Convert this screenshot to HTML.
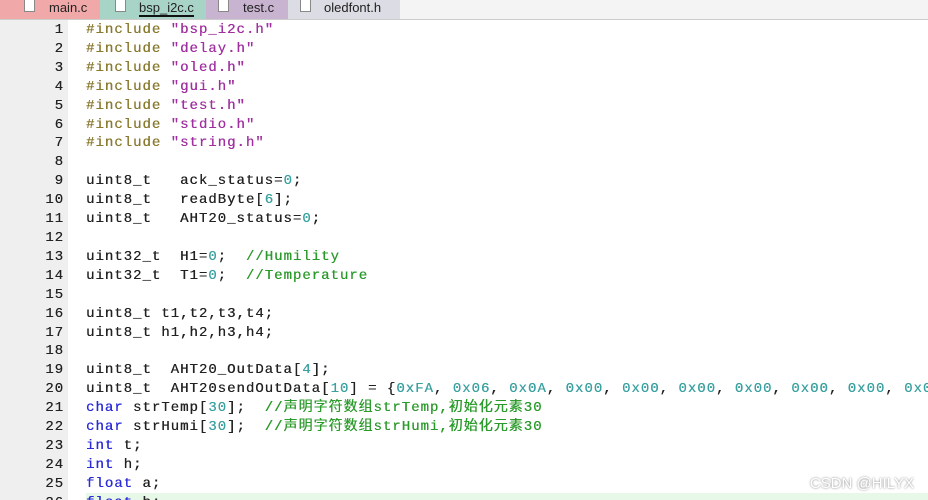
<!DOCTYPE html><html><head><style>
html,body{margin:0;width:928px;height:500px;overflow:hidden;background:#fff;font-family:"Liberation Sans",sans-serif;position:relative}
.tabs{position:absolute;top:0;left:0;width:928px;height:19px;background:#f4f4f4;border-bottom:1px solid #ccc}
.tab{position:absolute;top:0;height:19px;font-size:13px;line-height:15px;color:#222}
.tab i{position:absolute;top:0;width:9px;height:11px;background:#fff;border:1px solid #888;border-top:none}
.gut{position:absolute;top:20px;left:0;width:68px;height:480px;background:#efefef}
.code{position:absolute;top:21px;left:0;font-family:"Liberation Mono","Noto Sans CJK SC",monospace;font-size:14px;letter-spacing:1px;line-height:18.92px;text-shadow:0.3px 0 0 currentColor}
.l{height:18.92px;position:relative;white-space:pre;overflow:hidden;width:928px}
.n{display:inline-block;width:64px;text-align:right;color:#222;margin-right:22px}
.p{color:#8a7a30}.s{color:#a030a0}.k{color:#2a2ad8}.d{color:#3aa0a0}.c{color:#2a9a2a}.t{color:#222}
.hl{position:absolute;left:86px;top:493px;width:842px;height:19px;background:#e8f8e8}
.wm{position:absolute;right:14px;bottom:8px;font-size:15px;color:#fff;text-shadow:0 0 2px #777}
</style></head><body>
<div class="tabs">
<div class="tab" style="left:0;width:100px;background:#f0a8a8"><i style="left:24px"></i><span style="position:absolute;left:49px">main.c</span></div>
<div class="tab" style="left:100px;width:106px;background:#a8d4c8"><i style="left:15px"></i><span style="position:absolute;left:39px;border-bottom:2px solid #111">bsp_i2c.c</span></div>
<div class="tab" style="left:206px;width:82px;background:#c8b4d0"><i style="left:12px"></i><span style="position:absolute;left:37px">test.c</span></div>
<div class="tab" style="left:288px;width:112px;background:#dcdce4"><i style="left:12px"></i><span style="position:absolute;left:36px">oledfont.h</span></div>
</div>
<div class="gut"></div>
<div class="hl"></div>
<div class="code"><div class="l"><span class="n">1</span><span class="p">#include</span> <span class="s">"bsp_i2c.h"</span></div><div class="l"><span class="n">2</span><span class="p">#include</span> <span class="s">"delay.h"</span></div><div class="l"><span class="n">3</span><span class="p">#include</span> <span class="s">"oled.h"</span></div><div class="l"><span class="n">4</span><span class="p">#include</span> <span class="s">"gui.h"</span></div><div class="l"><span class="n">5</span><span class="p">#include</span> <span class="s">"test.h"</span></div><div class="l"><span class="n">6</span><span class="p">#include</span> <span class="s">"stdio.h"</span></div><div class="l"><span class="n">7</span><span class="p">#include</span> <span class="s">"string.h"</span></div><div class="l"><span class="n">8</span></div><div class="l"><span class="n">9</span><span class="t">uint8_t   ack_status=<span class="d">0</span>;</span></div><div class="l"><span class="n">10</span><span class="t">uint8_t   readByte[<span class="d">6</span>];</span></div><div class="l"><span class="n">11</span><span class="t">uint8_t   AHT20_status=<span class="d">0</span>;</span></div><div class="l"><span class="n">12</span></div><div class="l"><span class="n">13</span><span class="t">uint32_t  H1=<span class="d">0</span>;  <span class="c">//Humility</span></span></div><div class="l"><span class="n">14</span><span class="t">uint32_t  T1=<span class="d">0</span>;  <span class="c">//Temperature</span></span></div><div class="l"><span class="n">15</span></div><div class="l"><span class="n">16</span><span class="t">uint8_t t1,t2,t3,t4;</span></div><div class="l"><span class="n">17</span><span class="t">uint8_t h1,h2,h3,h4;</span></div><div class="l"><span class="n">18</span></div><div class="l"><span class="n">19</span><span class="t">uint8_t  AHT20_OutData[<span class="d">4</span>];</span></div><div class="l"><span class="n">20</span><span class="t">uint8_t  AHT20sendOutData[<span class="d">10</span>] = {<span class="d">0xFA</span>, <span class="d">0x06</span>, <span class="d">0x0A</span>, <span class="d">0x00</span>, <span class="d">0x00</span>, <span class="d">0x00</span>, <span class="d">0x00</span>, <span class="d">0x00</span>, <span class="d">0x00</span>, <span class="d">0x00</span>};</span></div><div class="l"><span class="n">21</span><span class="k">char</span><span class="t"> strTemp[<span class="d">30</span>];  <span class="c">//声明字符数组strTemp,初始化元素30</span></span></div><div class="l"><span class="n">22</span><span class="k">char</span><span class="t"> strHumi[<span class="d">30</span>];  <span class="c">//声明字符数组strHumi,初始化元素30</span></span></div><div class="l"><span class="n">23</span><span class="k">int</span><span class="t"> t;</span></div><div class="l"><span class="n">24</span><span class="k">int</span><span class="t"> h;</span></div><div class="l"><span class="n">25</span><span class="k">float</span><span class="t"> a;</span></div><div class="l"><span class="n">26</span><span class="k">float</span><span class="t"> b;</span></div></div>
<div class="wm">CSDN @HILYX</div>
</body></html>
